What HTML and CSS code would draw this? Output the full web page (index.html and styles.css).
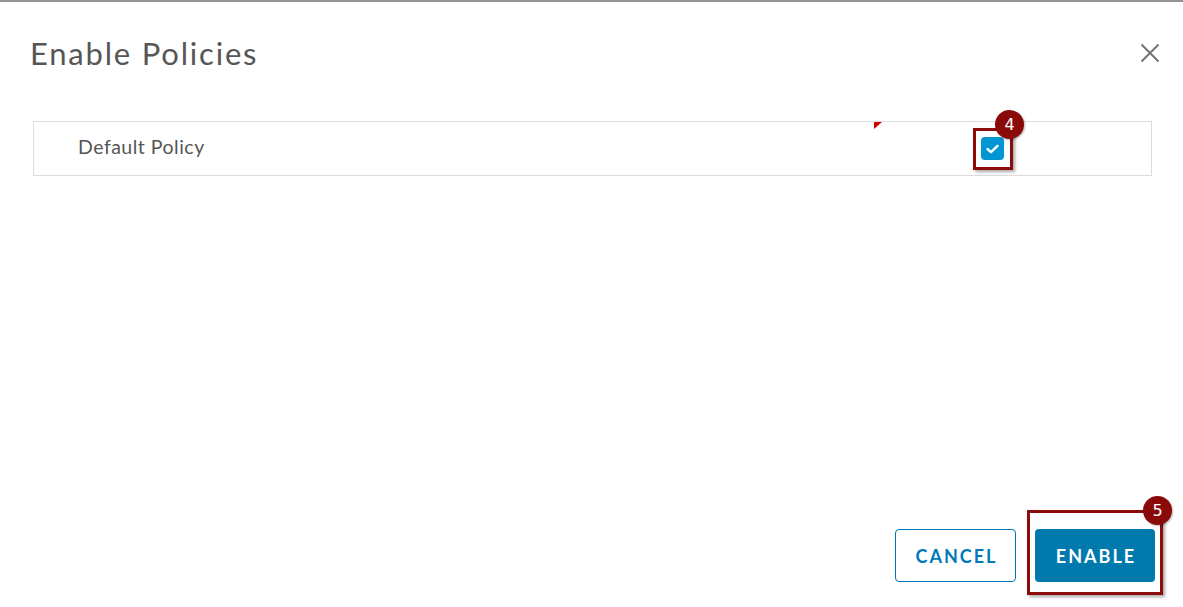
FILE: index.html
```html
<!DOCTYPE html>
<html>
<head>
<meta charset="utf-8">
<link rel="stylesheet" href="styles.css">
</head>
<body>
<div class="modal">
  <div class="header">
    <h1 class="title">Enable Policies</h1>
    <button class="close" aria-label="Close">
      <svg width="20" height="20" viewBox="0 0 20 20"><path d="M1.5 1.5 L18.5 18.5 M18.5 1.5 L1.5 18.5" stroke="#737373" stroke-width="2" fill="none"/></svg>
    </button>
  </div>
  <div class="row">
    <span class="tri"></span>
    <span class="name">Default Policy</span>
    <span class="check-wrap">
      <span class="checkbox">
        <svg width="13" height="10" viewBox="0 0 13 10"><path d="M1.5 5 L5 8.2 L11.5 1.8" stroke="#fff" stroke-width="2.4" fill="none" stroke-linecap="round" stroke-linejoin="round"/></svg>
      </span>
      <span class="annot annot-check"></span>
      <span class="badge badge-check">4</span>
    </span>
  </div>
  <div class="footer">
    <button class="btn btn-outline">CANCEL</button>
    <span class="enable-wrap">
      <button class="btn btn-primary">ENABLE</button>
      <span class="annot annot-enable"></span>
      <span class="badge badge-enable">5</span>
    </span>
  </div>
</div>
</body>
</html>
```
FILE: styles.css
```css
html, body {
  margin: 0;
  padding: 0;
  background: #fff;
}
body {
  font-family: "Lato", "Open Sans", sans-serif;
  color: #565656;
}
.modal {
  height: 607px;
  box-sizing: border-box;
  border-top: 2px solid #939393;
  display: flex;
  flex-direction: column;
}
.header {
  display: flex;
  align-items: center;
  justify-content: space-between;
  padding: 31px 23px 0 30px;
  height: 40px;
}
.title {
  margin: 0;
  font-family: "Lato", sans-serif;
  font-weight: 400;
  font-size: 31px;
  line-height: 40px;
  letter-spacing: 1.8px;
  color: #565656;
}
.close {
  border: 0;
  background: none;
  padding: 0;
  width: 20px;
  height: 20px;
  display: flex;
  cursor: pointer;
}
.row {
  position: relative;
  margin: 48px 31px 0 33px;
  height: 53px;
  border: 1px solid #dcdcdc;
  display: flex;
  align-items: center;
  padding-left: 44px;
}
.name {
  flex: 1;
  font-size: 19.5px;
  letter-spacing: 0.5px;
  color: #565656;
  padding-bottom: 4px;
}
.tri {
  position: absolute;
  top: 0;
  left: 840px;
  width: 0;
  height: 0;
  border-top: 7px solid #d00000;
  border-right: 8px solid transparent;
}
.check-wrap {
  position: relative;
  margin-right: 147px;
  display: flex;
}
.checkbox {
  width: 23px;
  height: 23px;
  background: #0095d3;
  border-radius: 4px;
  display: flex;
  align-items: center;
  justify-content: center;
}
.annot {
  position: absolute;
  border: 3px solid #8c0b0b;
  box-shadow: 2px 2px 3px rgba(0,0,0,0.35);
  box-sizing: border-box;
}
.annot-check {
  left: -8px;
  top: -9px;
  width: 40px;
  height: 42px;
}
.badge {
  position: absolute;
  width: 29px;
  height: 29px;
  border-radius: 50%;
  background: #8a0a0a;
  color: #fff;
  font-family: "DejaVu Sans", sans-serif;
  font-size: 16px;
  font-weight: 400;
  display: flex;
  align-items: center;
  justify-content: center;
  box-shadow: 1px 1px 2px rgba(0,0,0,0.3);
}
.badge-check {
  left: 14px;
  top: -27px;
}
.footer {
  margin-top: auto;
  display: flex;
  justify-content: flex-end;
  align-items: center;
  gap: 19px;
  padding: 0 28px 25px 0;
}
.btn {
  height: 53px;
  width: 121px;
  border-radius: 4px;
  font-family: "Lato", sans-serif;
  font-weight: 700;
  font-size: 18px;
  letter-spacing: 2px;
  padding: 0 0 0 2px;
  cursor: pointer;
}
.btn-outline {
  background: #fff;
  color: #0079b8;
  border: 1px solid #0079b8;
}
.btn-primary {
  background: #0079ad;
  color: #fff;
  border: 0;
  width: 120px;
}
.enable-wrap {
  position: relative;
  display: flex;
}
.annot-enable {
  left: -8px;
  top: -19px;
  width: 136px;
  height: 85px;
}
.badge-enable {
  left: 108px;
  top: -33px;
}
```
